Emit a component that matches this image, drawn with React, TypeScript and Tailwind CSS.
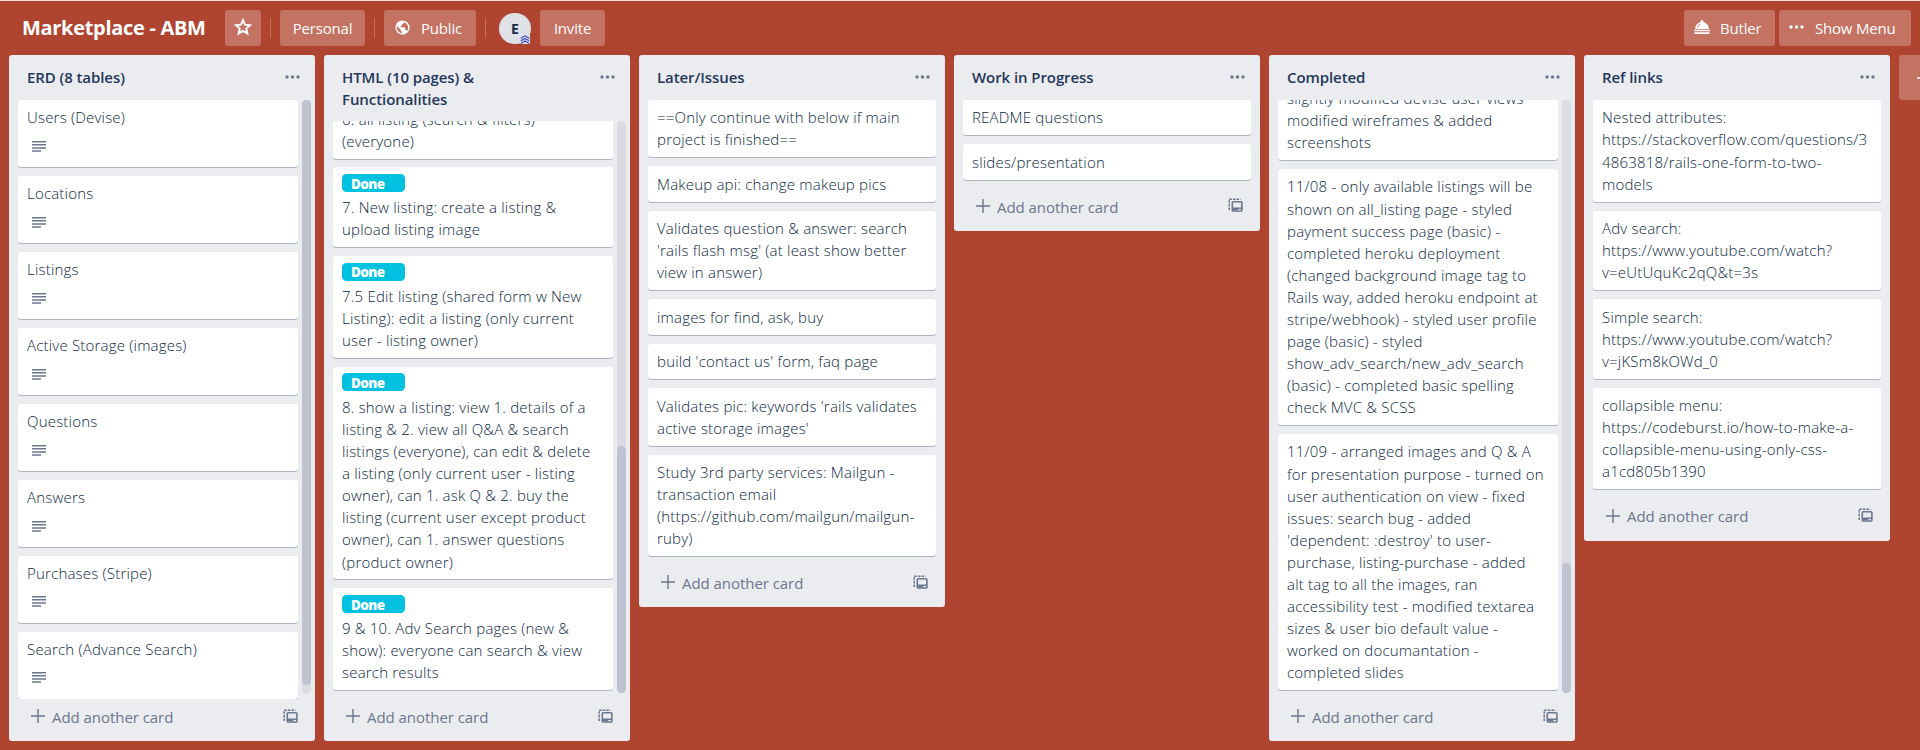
import React from "react";

type CardData = { lines: string[]; done?: boolean; desc?: boolean };

const erd: CardData[] = [
  "Users (Devise)", "Locations", "Listings", "Active Storage (images)",
  "Questions", "Answers", "Purchases (Stripe)", "Search (Advance Search)",
].map((t) => ({ lines: [t], desc: true }));

const html: CardData[] = [
  { lines: ["6. all listing (search & filters)", "(everyone)"] },
  { done: true, lines: ["7. New listing: create a listing &", "upload listing image"] },
  { done: true, lines: ["7.5 Edit listing (shared form w New", "Listing): edit a listing (only current", "user - listing owner)"] },
  {
    done: true,
    lines: [
      "8. show a listing: view 1. details of a", "listing & 2. view all Q&A & search", "listings (everyone), can edit & delete",
      "a listing (only current user - listing", "owner), can 1. ask Q & 2. buy the", "listing (current user except product",
      "owner), can 1. answer questions", "(product owner)",
    ],
  },
  { done: true, lines: ["9 & 10. Adv Search pages (new &", "show): everyone can search & view", "search results"] },
];

const later: CardData[] = [
  { lines: ["==Only continue with below if main", "project is finished=="] },
  { lines: ["Makeup api: change makeup pics"] },
  { lines: ["Validates question & answer: search", "'rails flash msg' (at least show better", "view in answer)"] },
  { lines: ["images for find, ask, buy"] },
  { lines: ["build 'contact us' form, faq page"] },
  { lines: ["Validates pic: keywords 'rails validates", "active storage images'"] },
  { lines: ["Study 3rd party services: Mailgun -", "transaction email", "(https://github.com/mailgun/mailgun-", "ruby)"] },
];

const wip: CardData[] = [{ lines: ["README questions"] }, { lines: ["slides/presentation"] }];

const completed: CardData[] = [
  { lines: ["slightly modified devise user views", "modified wireframes & added", "screenshots"] },
  {
    lines: [
      "11/08 - only available listings will be", "shown on all_listing page - styled", "payment success page (basic) -",
      "completed heroku deployment", "(changed background image tag to", "Rails way, added heroku endpoint at",
      "stripe/webhook) - styled user profile", "page (basic) - styled", "show_adv_search/new_adv_search",
      "(basic) - completed basic spelling", "check MVC & SCSS",
    ],
  },
  {
    lines: [
      "11/09 - arranged images and Q & A", "for presentation purpose - turned on", "user authentication on view - fixed",
      "issues: search bug - added", "'dependent: :destroy' to user-", "purchase, listing-purchase - added",
      "alt tag to all the images, ran", "accessibility test - modified textarea", "sizes & user bio default value -",
      "worked on documantation -", "completed slides",
    ],
  },
];

const refs: CardData[] = [
  { lines: ["Nested attributes:", "https://stackoverflow.com/questions/3", "4863818/rails-one-form-to-two-", "models"] },
  { lines: ["Adv search:", "https://www.youtube.com/watch?", "v=eUtUquKc2qQ&t=3s"] },
  { lines: ["Simple search:", "https://www.youtube.com/watch?", "v=jKSm8kOWd_0"] },
  { lines: ["collapsible menu:", "https://codeburst.io/how-to-make-a-", "collapsible-menu-using-only-css-", "a1cd805b1390"] },
];

function Dots({ className }: { className: string }) {
  return (
    <svg viewBox="0 0 15 4" className={className} fill="currentColor">
      <circle cx="2" cy="2" r="1.7" />
      <circle cx="7.5" cy="2" r="1.7" />
      <circle cx="13" cy="2" r="1.7" />
    </svg>
  );
}

function Card({ card }: { card: CardData }) {
  return (
    <div className="shrink-0 rounded-[3px] bg-white px-[9px] pt-[6.4px] pb-[6.8px] shadow-[0_1px_0_#aeb5c2]">
      {card.done && (
        <div className="mt-[0.1px] mb-[4.5px] flex h-[18px] w-[63px] items-center rounded-[4.5px] bg-[#00c2e0] pt-[2px] pl-[9px] text-[13.5px] font-extrabold tracking-[-0.6px] text-white">
          Done
        </div>
      )}
      {card.lines.map((l, i) => (
        <div key={i} className="h-[22.1px] leading-[22.1px] whitespace-nowrap">{l}</div>
      ))}
      {card.desc && (
        <div className="flex h-[31.9px] pt-[12.2px] pl-[4.5px] text-[#6b778c]">
          <svg viewBox="0 0 14 11" className="h-[11px] w-[14px]" fill="currentColor">
            <path d="M0 0h14v1.5H0zM0 3.1h14v1.5H0zM0 6.2h14v1.5H0zM0 9.3h9v1.5H0z" />
          </svg>
        </div>
      )}
    </div>
  );
}

function Footer() {
  return (
    <div className="flex h-[24px] items-center justify-between pr-[17px] pl-[22px] font-normal tracking-normal text-[#6b778c]">
      <div className="flex items-center gap-[7px]">
        <svg viewBox="0 0 14 14" className="mb-[2px] h-[14px] w-[14px]" stroke="currentColor" strokeWidth="1.4" fill="none">
          <path d="M7 0v14M0 7h14" />
        </svg>
        <span className="text-[15px] tracking-[-0.05px] whitespace-nowrap">Add another card</span>
      </div>
      <svg viewBox="0 0 15 14" className="mb-[3px] h-[14px] w-[15px]" fill="none" stroke="currentColor">
        <path d="M1.200 12V1.200H12.500" strokeWidth="1.500" strokeDasharray="2.600 1" />
        <rect x="4.300" y="3.800" width="9.600" height="9.200" rx="0.8" strokeWidth="1.600" />
        <path d="M4.300 10.200h9.600M4.300 11.500h6" strokeWidth="1.400" />
      </svg>
    </div>
  );
}

type ListProps = {
  title: string[];
  cards: CardData[];
  thumb?: string;
  fromBottom?: boolean;
};

function List({ title, cards, thumb, fromBottom }: ListProps) {
  const scroll = thumb !== undefined;
  return (
    <section className={`flex w-[306px] shrink-0 flex-col rounded-[3px] bg-[#ebecf0] ${scroll ? "h-[686px]" : "h-fit"}`}>
      <header className="flex shrink-0 items-start justify-between pt-[11px] pr-[15px] pb-[12px] pl-[18px]">
        <h2 className="text-[15px] font-semibold tracking-[-0.08px] text-[#24375a]">
          {title.map((t) => (
            <span key={t} className="block h-[22px] leading-[22px] whitespace-nowrap">{t}</span>
          ))}
        </h2>
        <Dots className="mt-[9px] h-[4px] w-[15px] text-[#6b778c]" />
      </header>
      {scroll ? (
        <div className={`flex min-h-0 grow pr-[4px] pl-[9px] ${fromBottom ? "pb-[6px]" : ""} ${title.length > 1 ? "-mt-[1px]" : ""}`}>
          <div className={`flex w-[279.5px] flex-col gap-[8.8px] overflow-hidden ${fromBottom ? "justify-end pb-[2.7px]" : ""}`}>
            {cards.map((c, i) => <Card key={i} card={c} />)}
          </div>
          <div className={`ml-[4.5px] flex w-[9px] flex-col rounded-[5px] bg-[#dadbe3] ${fromBottom ? "justify-end" : "mb-[5px]"}`}>
            <div className={`rounded-[5px] bg-[#bfc2cf] ${thumb}`} />
          </div>
        </div>
      ) : (
        <div className="flex flex-col gap-[9.1px] px-[9px]">
          {cards.map((c, i) => <Card key={i} card={c} />)}
        </div>
      )}
      <div className={scroll ? "shrink-0 pt-[6px] pb-[12px]" : "pt-[15.300px] pb-[12px]"}>
        <Footer />
      </div>
    </section>
  );
}

const btn = "flex h-[36px] shrink-0 items-center rounded-[3px] bg-[#c47262] text-[15px] tracking-[-0.2px] whitespace-nowrap";

function Separator() {
  return <div className="h-[18px] w-px shrink-0 bg-[#c47262]" />;
}

export default function App() {
  return (
    <div className="flex h-[750px] w-[1920px] flex-col overflow-hidden border-t border-[#f3e6dc] bg-[#af4531] font-['Open_Sans','Noto_Sans',sans-serif] text-[15px] font-light tracking-[0.2px] text-[#0c1f42]">
      <div className="flex h-[54px] shrink-0 items-center pt-0 pr-[9px] pl-[22px] font-normal text-white">
        <h1 className="w-[203px] shrink-0 text-[20px] font-bold tracking-[-0.3px] whitespace-nowrap">Marketplace - ABM</h1>
        <div className={`${btn} mr-[9px] w-[36px] justify-center`}>
          <svg viewBox="0 0 24 24" className="mb-[3px] h-[18px] w-[18px]" fill="none" stroke="currentColor" strokeWidth="2.6">
            <path d="M12 2.8l2.7 6.1 6.6.7-5 4.4 1.5 6.6L12 17.2l-5.800 3.400 1.500-6.600-5-4.400 6.600-.7z" />
          </svg>
        </div>
        <Separator />
        <div className={`${btn} mx-[9px] w-[85px] justify-center`}>Personal</div>
        <Separator />
        <div className={`${btn} mx-[9px] w-[92px] pl-[11px]`}>
          <svg viewBox="0 0 16 16" className="mr-[11px] mb-[2px] h-[15px] w-[15px]">
            <circle cx="8" cy="8" r="7.6" fill="#fff" />
            <path d="M2 6.500 6 10v1.500l1.300 1v1.600A6.200 6.200 0 0 1 2 6.500zM9.500 2.300c-.2 1.500-.8 1.900-2 2.100v1.500l-1.500.6v1.300h4l1 1.200v1.600h1.300l.8 1A6.200 6.200 0 0 0 9.500 2.300z" fill="#c47262" />
          </svg>
          Public
        </div>
        <Separator />
        <div className="relative mr-[9px] ml-[13px] flex h-[31px] w-[32px] shrink-0 items-center justify-center rounded-full bg-[#dfe1e6] text-[14px] font-bold text-[#172b4d]">
          E
          <svg viewBox="0 0 10 9" className="absolute right-[1px] bottom-0 h-[9px] w-[10px] bg-[#dfe1e6]" fill="none" stroke="#3545b8" strokeWidth="1.1">
            <path d="M.8 3.200 5 .8l4.200 2.400M.8 5.800 5 3.400l4.200 2.400M.8 8.400 5 6l4.200 2.400" />
          </svg>
        </div>
        <div className={`${btn} w-[65px] justify-center`}>Invite</div>
        <div className="grow" />
        <div className={`${btn} mr-[4px] w-[91px] pl-[10px]`}>
          <svg viewBox="0 0 16 14" className="mr-[10px] mb-[3px] h-[14px] w-[16px]" fill="currentColor">
            <circle cx="8" cy="1.500" r="1.500" />
            <path d="M1 9a7 7 0 0 1 14 0zM0 9.800h16v1.500H0zM.5 12.300h15V14H.5z" />
            <path d="M3.200 7.600A5 5 0 0 1 6.600 4" fill="none" stroke="#c47262" strokeWidth="0.8" />
          </svg>
          Butler
        </div>
        <div className={`${btn} w-[132px] pl-[10px]`}>
          <Dots className="mr-[11px] mb-[3px] h-[4px] w-[15px]" />
          Show Menu
        </div>
      </div>
      <main className="flex min-h-0 grow items-start gap-[9px] pl-[9px]">
        <List title={["ERD (8 tables)"]} cards={erd} thumb="h-[585px]" />
        <List title={["HTML (10 pages) &", "Functionalities"]} cards={html} thumb="h-[247px]" fromBottom />
        <List title={["Later/Issues"]} cards={later} />
        <List title={["Work in Progress"]} cards={wip} />
        <List title={["Completed"]} cards={completed} thumb="h-[130px]" fromBottom />
        <List title={["Ref links"]} cards={refs} />
        <div className="flex h-[45px] w-[306px] shrink-0 items-center rounded-[3px] bg-[#c47262] pl-[18px] text-white">
          <svg viewBox="0 0 14 14" className="h-[14px] w-[14px]" stroke="currentColor" strokeWidth="1.600">
            <path d="M7 0v14M0 7h14" />
          </svg>
        </div>
      </main>
    </div>
  );
}
